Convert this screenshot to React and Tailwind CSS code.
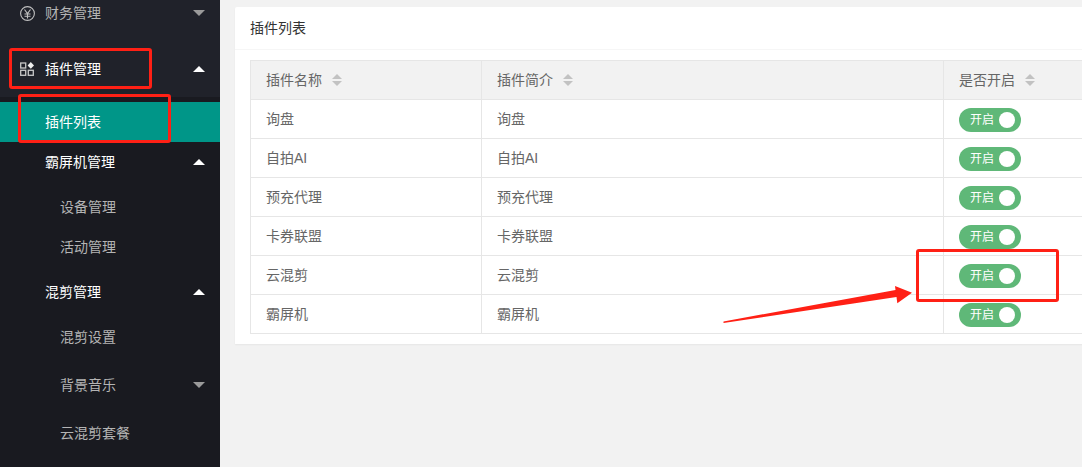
import React from "react";

const rows = ["询盘", "自拍AI", "预充代理", "卡券联盟", "云混剪", "霸屏机"];

const Caret = ({ up, color }) => (
  <svg width="12" height="6" viewBox="0 0 12 6" className="shrink-0">
    <polygon points={up ? "6,0 12,6 0,6" : "0,0 12,0 6,6"} fill={color} />
  </svg>
);

const SortIcon = () => (
  <svg width="10" height="12" viewBox="0 0 10 12" className="ml-[10px] shrink-0">
    <polygon points="5,0 10,5 0,5" fill="#c2c2c2" />
    <polygon points="0,7 10,7 5,12" fill="#c2c2c2" />
  </svg>
);

const Yen = () => (
  <svg width="15" height="15" viewBox="0 0 15 15" fill="none" stroke="#c0c0c0" strokeWidth="1.1">
    <circle cx="7.5" cy="7.5" r="6.9" />
    <path d="M4.5 3.5l3 4 3-4M7.5 7.5v5M4.5 8h6M4.5 10.2h6" />
  </svg>
);

const Grid = () => (
  <svg width="14" height="14" viewBox="0 0 14 14" fill="none" stroke="#c8c8c8" strokeWidth="1.3">
    <rect x="0.7" y="1" width="5" height="5" />
    <rect x="0.7" y="8.3" width="5" height="5" />
    <rect x="8.3" y="8.3" width="5" height="5" />
    <polygon points="10.8,0 14,3.4 10.8,6.8 7.6,3.4" fill="#eeeeee" stroke="none" />
  </svg>
);

const NavRow = ({ icon, label, caret, active, sub, className }) => (
  <div
    className={`flex h-10 items-center pr-[15px] ${sub ? "pl-[60px]" : "pl-[45px]"} ${
      active ? "text-white" : "text-[#b4b4b4]"
    } ${className || ""}`}
  >
    <span className="flex-1 whitespace-nowrap">{label}</span>
    {icon && <span className="absolute left-[20px] flex">{icon}</span>}
    {caret && <Caret up={caret === "up"} color={active ? "#ffffff" : "#9a9a9a"} />}
  </div>
);

const Sidebar = () => (
  <aside className="relative flex h-[467px] w-[220px] shrink-0 flex-col overflow-hidden bg-[#191a20] text-sm">
    <div className="-mt-[15px] bg-[#20222a]">
      <NavRow icon={<Yen />} label="财务管理" caret="down" className="h-14" />
      <NavRow icon={<Grid />} label="插件管理" caret="up" active className="h-14" />
    </div>
    <div className="pt-[5px]">
      <NavRow label="插件列表" active className="bg-[#009688]" />
      <NavRow label="霸屏机管理" caret="up" active />
      <div className="py-[5px]">
        <NavRow label="设备管理" sub />
        <NavRow label="活动管理" sub />
      </div>
      <NavRow label="混剪管理" caret="up" active />
      <NavRow label="混剪设置" sub className="mt-[5px] mb-2" />
      <NavRow label="背景音乐" caret="down" sub className="mb-2" />
      <NavRow label="云混剪套餐" sub />
    </div>
  </aside>
);

const Switch = () => (
  <div className="mt-[2px] flex h-6 w-[62px] items-center justify-between rounded-full bg-[#5fb878] pl-[11px] pr-[6px] text-xs text-white">
    <span>开启</span>
    <span className="h-4 w-4 rounded-full bg-white" />
  </div>
);

const Th = ({ children }) => (
  <th className="h-[39px] border border-[#e6e6e6] px-[15px] text-left font-normal">
    <div className="flex items-center">
      {children}
      <SortIcon />
    </div>
  </th>
);

const Td = ({ children }) => (
  <td className="h-[39px] border border-[#e6e6e6] px-[15px]">{children}</td>
);

const Overlay = () => (
  <>
    <div className="absolute left-[9px] top-[48px] h-[41px] w-[143px] rounded-[3px] border-[3px] border-[#ff2015]" />
    <div className="absolute left-[18px] top-[94px] h-[49px] w-[153px] rounded-[3px] border-[3px] border-[#ff2015]" />
    <div className="absolute left-[916px] top-[249px] h-[53px] w-[143px] rounded-[3px] border-[3px] border-[#ff2015]" />
    <svg width="1082" height="467" className="pointer-events-none absolute left-0 top-0">
      <polygon points="723.5,321.5 723.5,323 896.5,297 897.3,303.3 912,292.7 895,286 895.5,290" fill="#ff2015" />
    </svg>
  </>
);

export default function App() {
  return (
    <div
      className="relative flex h-[467px] w-[1082px] overflow-hidden bg-[#f2f2f2] text-[#666666]"
      style={{ fontFamily: '"Liberation Sans", "Noto Sans CJK SC", sans-serif' }}
    >
      <Sidebar />
      <main className="pl-[15px] pt-[7px] text-sm">
        <section className="w-[1000px] rounded-t-[2px] bg-white pb-[10px] shadow-[0_1px_2px_rgba(0,0,0,0.05)]">
          <div className="flex h-[43px] items-center border-b border-[#f6f6f6] px-[15px] text-[#333333]">
            插件列表
          </div>
          <div className="px-[15px] pt-[10px]">
            <table className="w-full table-fixed border-collapse">
              <colgroup>
                <col className="w-[231px]" />
                <col className="w-[462px]" />
                <col />
              </colgroup>
              <thead className="bg-[#f2f2f2]">
                <tr>
                  <Th>插件名称</Th>
                  <Th>插件简介</Th>
                  <Th>是否开启</Th>
                </tr>
              </thead>
              <tbody>
                {rows.map((name) => (
                  <tr key={name}>
                    <Td>{name}</Td>
                    <Td>{name}</Td>
                    <Td>
                      <Switch />
                    </Td>
                  </tr>
                ))}
              </tbody>
            </table>
          </div>
        </section>
      </main>
      <Overlay />
    </div>
  );
}
